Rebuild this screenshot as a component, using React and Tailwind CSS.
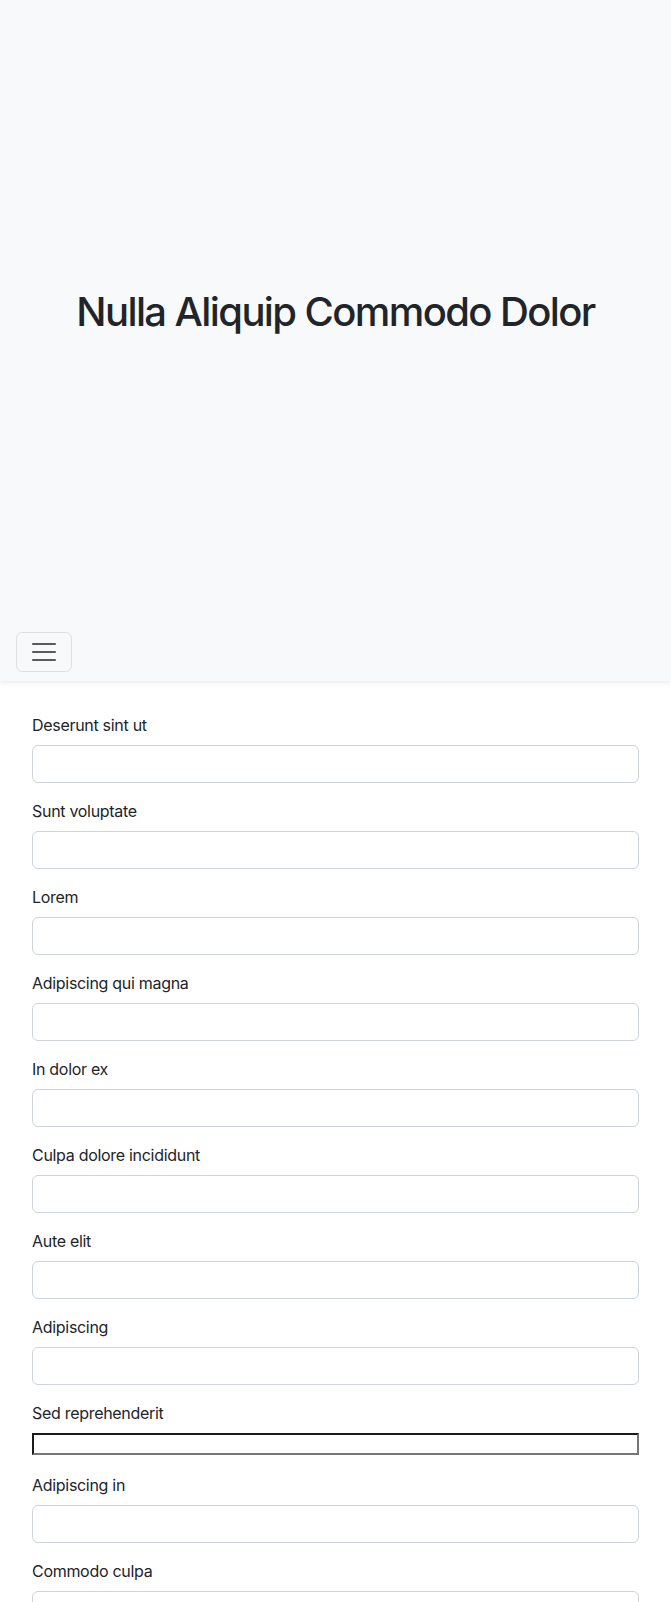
const fields = [
  'Deserunt sint ut',
  'Sunt voluptate',
  'Lorem',
  'Adipiscing qui magna',
  'In dolor ex',
  'Culpa dolore incididunt',
  'Aute elit',
  'Adipiscing',
  'Sed reprehenderit',
  'Adipiscing in',
  'Commodo culpa',
];

function Toggler() {
  return (
    <button
      type="button"
      className="px-3 py-1 border border-black/10 rounded-md bg-transparent"
      aria-label="Toggle navigation"
    >
      <svg className="w-[30px] h-[30px] block" viewBox="0 0 30 30">
        <path
          stroke="rgba(33,37,41,0.75)"
          strokeLinecap="round"
          strokeMiterlimit="10"
          strokeWidth="2"
          d="M4 7h22M4 15h22M4 23h22"
        />
      </svg>
    </button>
  );
}

export default function App() {
  return (
    <div className="min-h-screen bg-white text-[#212529] font-['Inter','Liberation_Sans',sans-serif]">
      <header className="h-[681px] flex flex-col bg-[#f8f9fa] shadow-[0_2px_4px_rgba(0,0,0,0.075)]">
        <div className="flex-1 flex items-center justify-center">
          <h1 className="text-[40px] leading-[1.2] font-medium tracking-[-1.6px] text-center">Nulla Aliquip Commodo Dolor</h1>
        </div>
        <nav className="py-2 px-4">
          <Toggler />
        </nav>
      </header>

      <form className="px-8 pt-8">
        {fields.map((label) =>
          label === 'Sed reprehenderit' ? (
            <div key={label} className="mb-[18px]">
              <label className="block mb-2 text-base leading-6 tracking-[-0.3px]">{label}</label>
              <input
                type="text"
                className="block w-full h-[22px] border-2 border-t-[#1b1b1b] border-l-[#1b1b1b] border-b-[#767676] border-r-[#767676] bg-white"
              />
            </div>
          ) : (
            <div key={label} className="mb-4">
              <label className="block mb-2 text-base leading-6 tracking-[-0.3px]">{label}</label>
              <input
                type="text"
                className="block w-full h-[38px] px-3 border border-[#ced4da] rounded-md bg-white"
              />
            </div>
          )
        )}
      </form>
    </div>
  );
}
